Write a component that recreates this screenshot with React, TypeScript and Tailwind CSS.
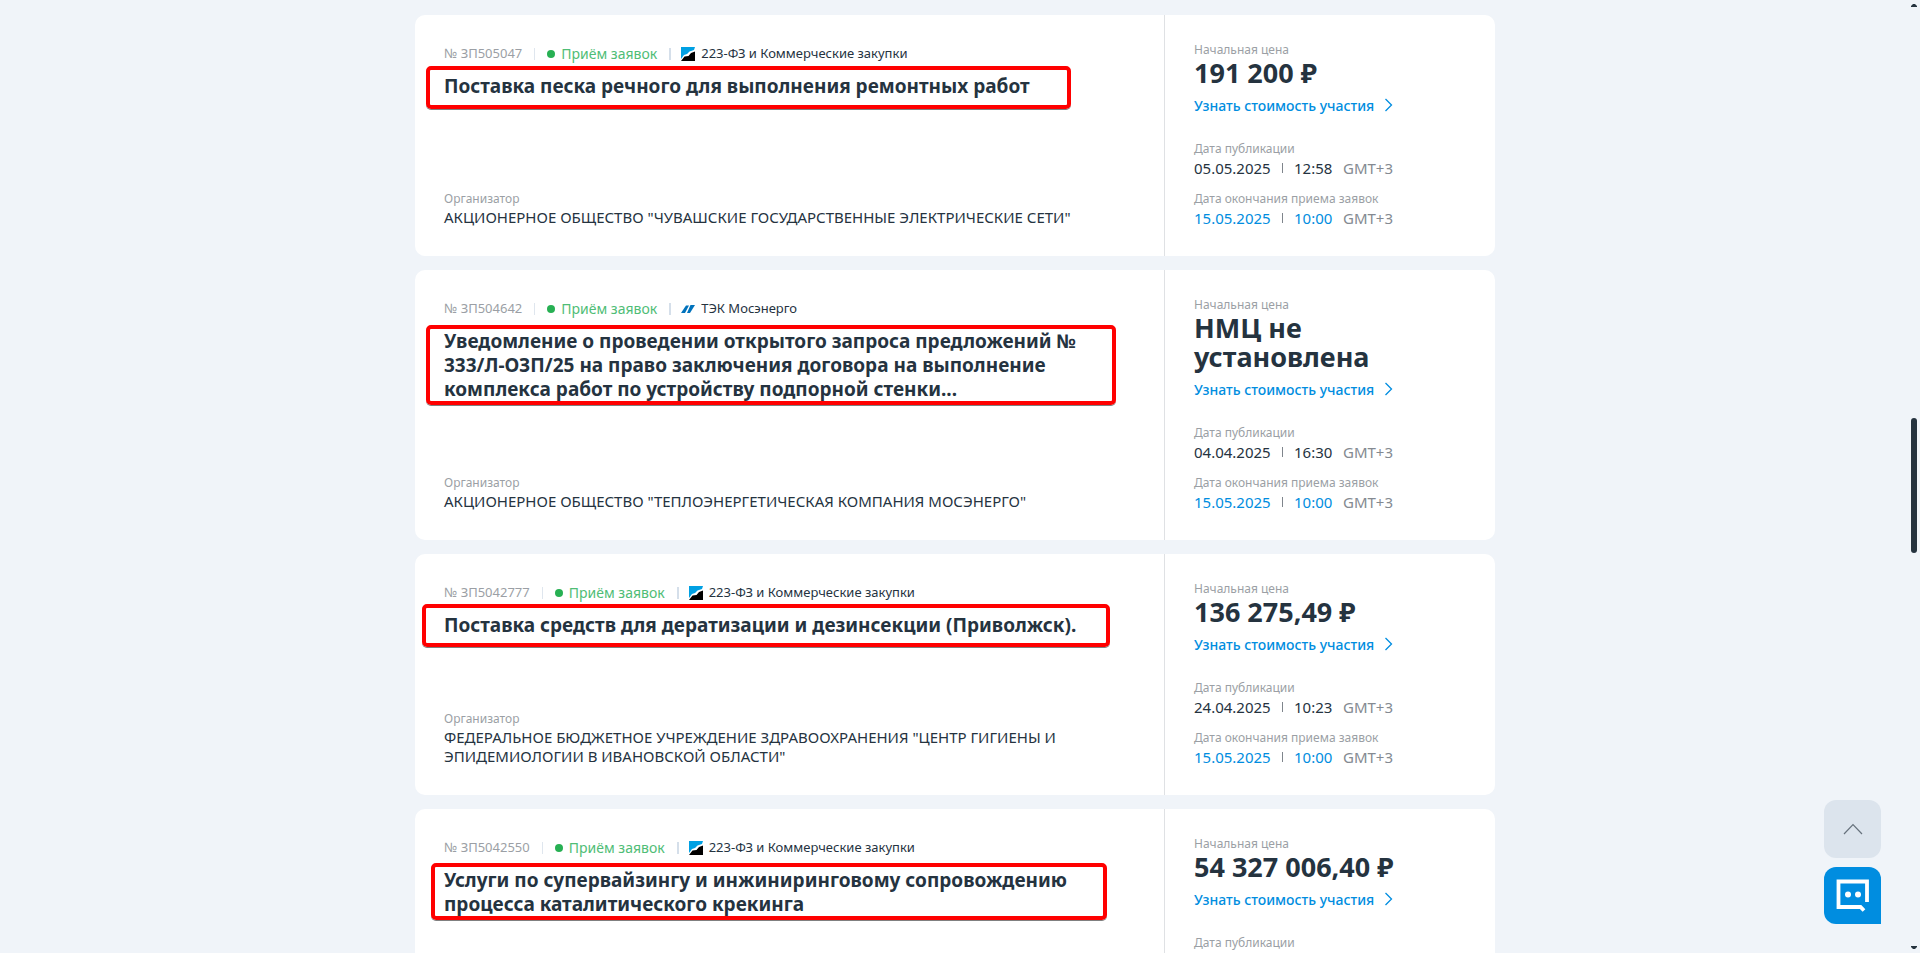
import React from "react";
import clsx from "clsx";

type Tender = {
  id: string;
  source: "fz" | "tek";
  title: string[];
  frame: string;
  organizer?: string[];
  price: string[];
  published?: [string, string];
  deadline?: [string, string];
};

const tenders: Tender[] = [
  {
    id: "ЗП505047",
    source: "fz",
    title: ["Поставка песка речного для выполнения ремонтных работ"],
    frame: "-top-[8px] -left-[18px] w-[645px] h-[43px]",
    organizer: [
      'АКЦИОНЕРНОЕ ОБЩЕСТВО "ЧУВАШСКИЕ ГОСУДАРСТВЕННЫЕ ЭЛЕКТРИЧЕСКИЕ СЕТИ"',
    ],
    price: ["191 200 ₽"],
    published: ["05.05.2025", "12:58"],
    deadline: ["15.05.2025", "10:00"],
  },
  {
    id: "ЗП504642",
    source: "tek",
    title: [
      "Уведомление о проведении открытого запроса предложений №",
      "333/Л-ОЗП/25 на право заключения договора на выполнение",
      "комплекса работ по устройству подпорной стенки...",
    ],
    frame: "-top-[4px] -left-[18px] w-[690px] h-[80px]",
    organizer: ['АКЦИОНЕРНОЕ ОБЩЕСТВО "ТЕПЛОЭНЕРГЕТИЧЕСКАЯ КОМПАНИЯ МОСЭНЕРГО"'],
    price: ["НМЦ не", "установлена"],
    published: ["04.04.2025", "16:30"],
    deadline: ["15.05.2025", "10:00"],
  },
  {
    id: "ЗП5042777",
    source: "fz",
    title: ["Поставка средств для дератизации и дезинсекции (Приволжск)."],
    frame: "-top-[9px] -left-[22px] w-[688px] h-[43px]",
    organizer: [
      'ФЕДЕРАЛЬНОЕ БЮДЖЕТНОЕ УЧРЕЖДЕНИЕ ЗДРАВООХРАНЕНИЯ "ЦЕНТР ГИГИЕНЫ И',
      'ЭПИДЕМИОЛОГИИ В ИВАНОВСКОЙ ОБЛАСТИ"',
    ],
    price: ["136 275,49 ₽"],
    published: ["24.04.2025", "10:23"],
    deadline: ["15.05.2025", "10:00"],
  },
  {
    id: "ЗП5042550",
    source: "fz",
    title: [
      "Услуги по супервайзингу и инжиниринговому сопровождению",
      "процесса каталитического крекинга",
    ],
    frame: "-top-[5px] -left-[13px] w-[676px] h-[57px]",
    price: ["54 327 006,40 ₽"],
  },
];

function Lines({ items }: { items: string[] }) {
  return (
    <>
      {items.map((line) => (
        <span key={line} className="block whitespace-nowrap">
          {line}
        </span>
      ))}
    </>
  );
}

function SourceIcon({ source }: { source: Tender["source"] }) {
  if (source === "tek") {
    return (
      <svg width="14" height="14" viewBox="0 0 14 14" aria-hidden="true">
        <path d="M0 11 L5 3.5 H8 L4 11 Z" fill="#0072bc" />
        <path d="M6 11 L9.5 3 H14 L9 11 Z" fill="#0072bc" />
      </svg>
    );
  }
  return (
    <svg width="14" height="14" viewBox="0 0 14 14" aria-hidden="true">
      <path d="M0 0 H14 L13 3 L8.5 4.5 L6 7 L3 8 L0 12 Z" fill="#00a0e3" />
      <path d="M14 4.5 V14 H0 L3.5 9.5 L7.5 9 L10 6 Z" fill="#000" />
    </svg>
  );
}

function DateRow({
  label,
  value,
  accent,
}: {
  label: string;
  value?: [string, string];
  accent?: boolean;
}) {
  return (
    <div>
      <dt className="text-[12px] leading-4 text-[#9b9fa5]">{label}</dt>
      {value && (
        <dd
          className={clsx(
            "mt-px flex h-5 items-center text-[15px] leading-5",
            accent ? "text-[#008de0]" : "text-[#25333f]",
          )}
        >
          <span className="w-[88px]">{value[0]}</span>
          <span className="h-[10px] w-px bg-[#7f858c]" />
          <span className="ml-[11px] w-[49px]">{value[1]}</span>
          <span className="text-[#848a91]">GMT+3</span>
        </dd>
      )}
    </div>
  );
}

function TenderCard({ tender }: { tender: Tender }) {
  return (
    <article className="flex min-h-[241px] rounded-[10px] bg-white">
      <div className="flex flex-1 flex-col justify-between pt-[29px] pb-[29px] pl-[29px]">
        <div>
          <div className="flex h-5 items-center text-[13px] text-[#25333f]">
            <span className="text-[#9b9fa5]">№ {tender.id}</span>
            <span className="mx-3 h-3 w-px bg-[#dfe6ee]" />
            <span className="h-2 w-2 rounded-full bg-[#27b053]" />
            <span className="ml-[6px] text-[14px] leading-5 text-[#4fbd76]">
              Приём заявок
            </span>
            <span className="mr-[10px] ml-3 h-3 w-[2px] bg-[#d5dfea]" />
            <SourceIcon source={tender.source} />
            <a href="#" className="ml-[6px]">
              {tender.source === "fz"
                ? "223-ФЗ и Коммерческие закупки"
                : "ТЭК Мосэнерго"}
            </a>
          </div>
          <div className="relative mt-[10px]">
            <h2 className="text-[19px] leading-6 font-bold text-[#25333f]">
              <Lines items={tender.title} />
            </h2>
            <div
              className={clsx(
                "pointer-events-none absolute rounded-[5px] border-4 border-[#ff0000] shadow-[0_1px_0_#808080]",
                tender.frame,
              )}
            />
          </div>
        </div>
        {tender.organizer && (
          <div>
            <p className="text-[12px] leading-4 text-[#9b9fa5]">Организатор</p>
            <p className="mt-px text-[15px] leading-[19px] text-[#25333f]">
              <Lines items={tender.organizer} />
            </p>
          </div>
        )}
      </div>
      <div className="w-[331px] border-l border-[#dfe1e4] pt-[27px] pb-7 pl-[29px]">
        <p className="text-[12px] leading-4 text-[#9b9fa5]">Начальная цена</p>
        <p className="text-[27px] leading-[29px] font-bold text-[#25333f]">
          <Lines items={tender.price} />
        </p>
        <a
          href="#"
          className="mt-2 flex h-5 w-[199px] items-center justify-between text-[14px] font-medium text-[#008de0]"
        >
          Узнать стоимость участия
          <svg width="9" height="14" viewBox="0 0 9 14" fill="none" aria-hidden="true">
            <path d="M1.5 1 L7.5 7 L1.5 13" stroke="currentColor" strokeWidth="1.3" />
          </svg>
        </a>
        <dl className="mt-[26px] flex flex-col gap-[13px]">
          <DateRow label="Дата публикации" value={tender.published} />
          {tender.deadline && (
            <DateRow
              label="Дата окончания приема заявок"
              value={tender.deadline}
              accent
            />
          )}
        </dl>
      </div>
    </article>
  );
}

export default function App() {
  return (
    <div className="flex h-screen overflow-hidden bg-[#f0f4f9] font-['Noto_Sans',sans-serif]">
      <main className="min-w-0 flex-1">
        <div className="mx-auto flex max-w-[1080px] flex-col gap-[14px] pt-[15px]">
          {tenders.map((tender) => (
            <TenderCard key={tender.id} tender={tender} />
          ))}
        </div>
      </main>

      {/* Scroll rail */}
      <div className="flex w-[10px] flex-col items-center justify-between pt-1 pr-[2px] pb-1">
        <svg width="6" height="3" viewBox="0 0 6 3" aria-hidden="true">
          <path d="M0 3 V2 L2 0 H4 L6 2 V3 Z" fill="#25333f" />
        </svg>
        <span className="mt-[17px] h-[135px] w-[6px] rounded-full bg-[#25333f]" />
        <svg width="6" height="3" viewBox="0 0 6 3" aria-hidden="true">
          <path d="M0 0 V1 L2 3 H4 L6 1 V0 Z" fill="#25333f" />
        </svg>
      </div>

      {/* Floating buttons */}
      <div className="fixed right-[39px] bottom-[29px] flex flex-col gap-[9px]">
        <button
          type="button"
          aria-label="Наверх"
          className="flex h-[58px] w-[57px] items-center justify-center rounded-xl bg-[#dce4ed]"
        >
          <svg width="20" height="12" viewBox="0 0 20 12" fill="none" aria-hidden="true">
            <path d="M1 11 L10 1.5 L19 11" stroke="#66717c" strokeWidth="1.2" />
          </svg>
        </button>
        <button
          type="button"
          aria-label="Чат"
          className="flex h-[57px] w-[57px] items-center justify-center rounded-xl rounded-br-none bg-[#008de0]"
        >
          <svg width="33" height="33" viewBox="0 0 33 33" fill="none" aria-hidden="true">
            <path
              d="M31 23 V2.5 H2.5 V28 H24.5 L28 31.5"
              stroke="#fff"
              strokeWidth="3.8"
            />
            <circle cx="12" cy="15.5" r="3" fill="#fff" />
            <circle cx="22" cy="15.5" r="3" fill="#fff" />
          </svg>
        </button>
      </div>
    </div>
  );
}
